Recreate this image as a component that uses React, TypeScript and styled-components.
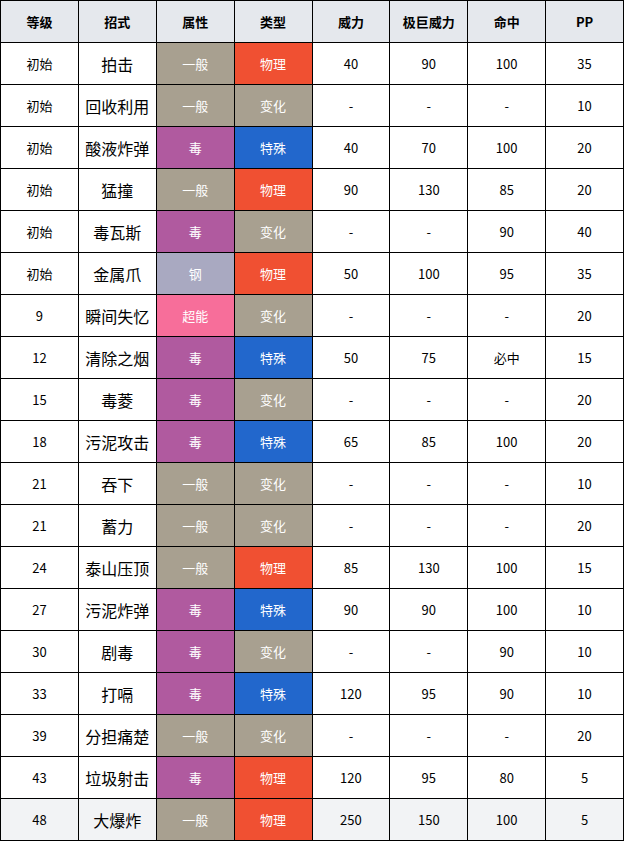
import React from 'react';
import styled, { createGlobalStyle } from 'styled-components';

const GlobalStyle = createGlobalStyle`
    html, body {
        margin: 0;
        padding: 0;
        background: #ffffff;
        font-family: "Noto Sans CJK SC", "Noto Sans", sans-serif;
    }
`;

const colors = {
    一般: '#a8a090',
    毒: '#b05a9f',
    钢: '#a9a9c1',
    超能: '#f76e9a',
    物理: '#f05032',
    特殊: '#2267cc',
    变化: '#a8a090',
} as Record<string, string>;

const Table = styled.table`
    width: 624px;
    border-collapse: collapse;
    table-layout: fixed;
    color: #000;
`;

const Th = styled.th`
    height: 41px;
    padding: 0;
    border: 1px solid #000;
    background: #e5e8ed;
    font-size: 13px;
    font-weight: 700;
    text-align: center;
`;

const Row = styled.tr<{ $shade?: boolean }>`
    background: ${(p) => (p.$shade ? '#f2f3f5' : '#ffffff')};
`;

const Td = styled.td<{ $big?: boolean }>`
    height: 41px;
    padding: 0;
    border: 1px solid #000;
    font-size: ${(p) => (p.$big ? '16px' : '13px')};
    text-align: center;
`;

const TypeCell = styled.td<{ $bg: string }>`
    height: 41px;
    padding: 0;
    border: 1px solid #000;
    background: ${(p) => p.$bg};
    color: #fff;
    font-size: 13px;
    text-align: center;
`;

type Move = [string, string, string, string, string, string, string, string];

const moves: Move[] = [
    ['初始', '拍击', '一般', '物理', '40', '90', '100', '35'],
    ['初始', '回收利用', '一般', '变化', '-', '-', '-', '10'],
    ['初始', '酸液炸弹', '毒', '特殊', '40', '70', '100', '20'],
    ['初始', '猛撞', '一般', '物理', '90', '130', '85', '20'],
    ['初始', '毒瓦斯', '毒', '变化', '-', '-', '90', '40'],
    ['初始', '金属爪', '钢', '物理', '50', '100', '95', '35'],
    ['9', '瞬间失忆', '超能', '变化', '-', '-', '-', '20'],
    ['12', '清除之烟', '毒', '特殊', '50', '75', '必中', '15'],
    ['15', '毒菱', '毒', '变化', '-', '-', '-', '20'],
    ['18', '污泥攻击', '毒', '特殊', '65', '85', '100', '20'],
    ['21', '吞下', '一般', '变化', '-', '-', '-', '10'],
    ['21', '蓄力', '一般', '变化', '-', '-', '-', '20'],
    ['24', '泰山压顶', '一般', '物理', '85', '130', '100', '15'],
    ['27', '污泥炸弹', '毒', '特殊', '90', '90', '100', '10'],
    ['30', '剧毒', '毒', '变化', '-', '-', '90', '10'],
    ['33', '打嗝', '毒', '特殊', '120', '95', '90', '10'],
    ['39', '分担痛楚', '一般', '变化', '-', '-', '-', '20'],
    ['43', '垃圾射击', '毒', '物理', '120', '95', '80', '5'],
    ['48', '大爆炸', '一般', '物理', '250', '150', '100', '5'],
];

const headers = ['等级', '招式', '属性', '类型', '威力', '极巨威力', '命中', 'PP'];

export default function App() {
    return (
        <>
            <GlobalStyle />
            <Table>
                <thead>
                    <tr>
                        {headers.map((h) => (
                            <Th key={h}>{h}</Th>
                        ))}
                    </tr>
                </thead>
                <tbody>
                    {moves.map((m, i) => (
                        <Row key={i} $shade={i === moves.length - 1}>
                            <Td>{m[0]}</Td>
                            <Td $big>{m[1]}</Td>
                            <TypeCell $bg={colors[m[2]]}>{m[2]}</TypeCell>
                            <TypeCell $bg={colors[m[3]]}>{m[3]}</TypeCell>
                            <Td>{m[4]}</Td>
                            <Td>{m[5]}</Td>
                            <Td>{m[6]}</Td>
                            <Td>{m[7]}</Td>
                        </Row>
                    ))}
                </tbody>
            </Table>
        </>
    );
}
